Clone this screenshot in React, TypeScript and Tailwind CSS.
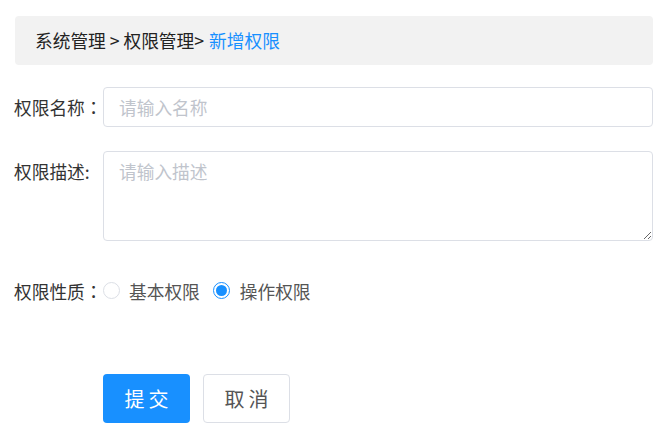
import React, { useState } from 'react';

const TC = { fontFamily: '"Noto Sans CJK TC", sans-serif' };

export default function App() {
  const [kind, setKind] = useState<'basic' | 'op'>('op');

  const radio = (on: boolean) => (
    <span
      className={`flex h-[17px] w-[17px] items-center justify-center rounded-full border ${
        on ? 'border-[#1890ff]' : 'border-[#dcdfe6]'
      }`}
    >
      {on && <span className="h-[11px] w-[11px] rounded-full bg-[#1890ff]" />}
    </span>
  );

  return (
    <div
      className="min-h-screen bg-white pl-[14px] pr-[17px] pt-[16px] text-[17.7px] text-[#333]"
      style={{ fontFamily: '"Noto Sans CJK SC", "Liberation Sans", sans-serif' }}
    >
      <div className="ml-[1px] flex h-[49px] items-center rounded-[4px] bg-[#f2f2f2] px-[20px] text-[#222]">
        <span>系统管理 &gt; 权限管理&gt;</span>
        <span className="ml-[5px] text-[#1890ff]">新增权限</span>
      </div>

      <div className="mt-[22px] flex items-center">
        <label className="w-[89px] shrink-0 whitespace-nowrap">
          权限名称<span style={TC}>：</span>
        </label>
        <input
          className="h-[40px] min-w-0 flex-1 rounded-[4px] border border-[#dcdfe6] px-[15px] text-[17.7px] text-[#333] outline-none placeholder:text-[#c0c4cc]"
          placeholder="请输入名称"
        />
      </div>

      <div className="mt-[24px] flex items-start">
        <label className="w-[89px] shrink-0 whitespace-nowrap pt-[7px]">权限描述:</label>
        <textarea
          className="h-[90px] min-w-0 flex-1 resize-y rounded-[4px] border border-[#dcdfe6] px-[15px] py-[6px] text-[17.7px] text-[#333] outline-none placeholder:text-[#c0c4cc]"
          placeholder="请输入描述"
        />
      </div>

      <div className="mt-[30px] flex h-[40px] items-center">
        <label className="w-[89px] shrink-0 whitespace-nowrap">
          权限性质<span style={TC}>：</span>
        </label>
        <button className="flex items-center" onClick={() => setKind('basic')}>
          {radio(kind === 'basic')}
          <span className="ml-[9px] text-[#555]">基本权限</span>
        </button>
        <button className="ml-[13px] flex items-center" onClick={() => setKind('op')}>
          {radio(kind === 'op')}
          <span className="ml-[10px] text-[#555]">操作权限</span>
        </button>
      </div>

      <div className="mt-[63px] flex pl-[89px]">
        <button className="h-[49px] w-[87px] rounded-[4px] bg-[#1890ff] pl-[4px] text-[20px] tracking-[4px] text-white">
          提交
        </button>
        <button className="ml-[13px] h-[49px] w-[87px] rounded-[4px] border border-[#dcdfe6] bg-white pl-[4px] text-[20px] tracking-[4px] text-[#555]">
          取消
        </button>
      </div>
    </div>
  );
}
